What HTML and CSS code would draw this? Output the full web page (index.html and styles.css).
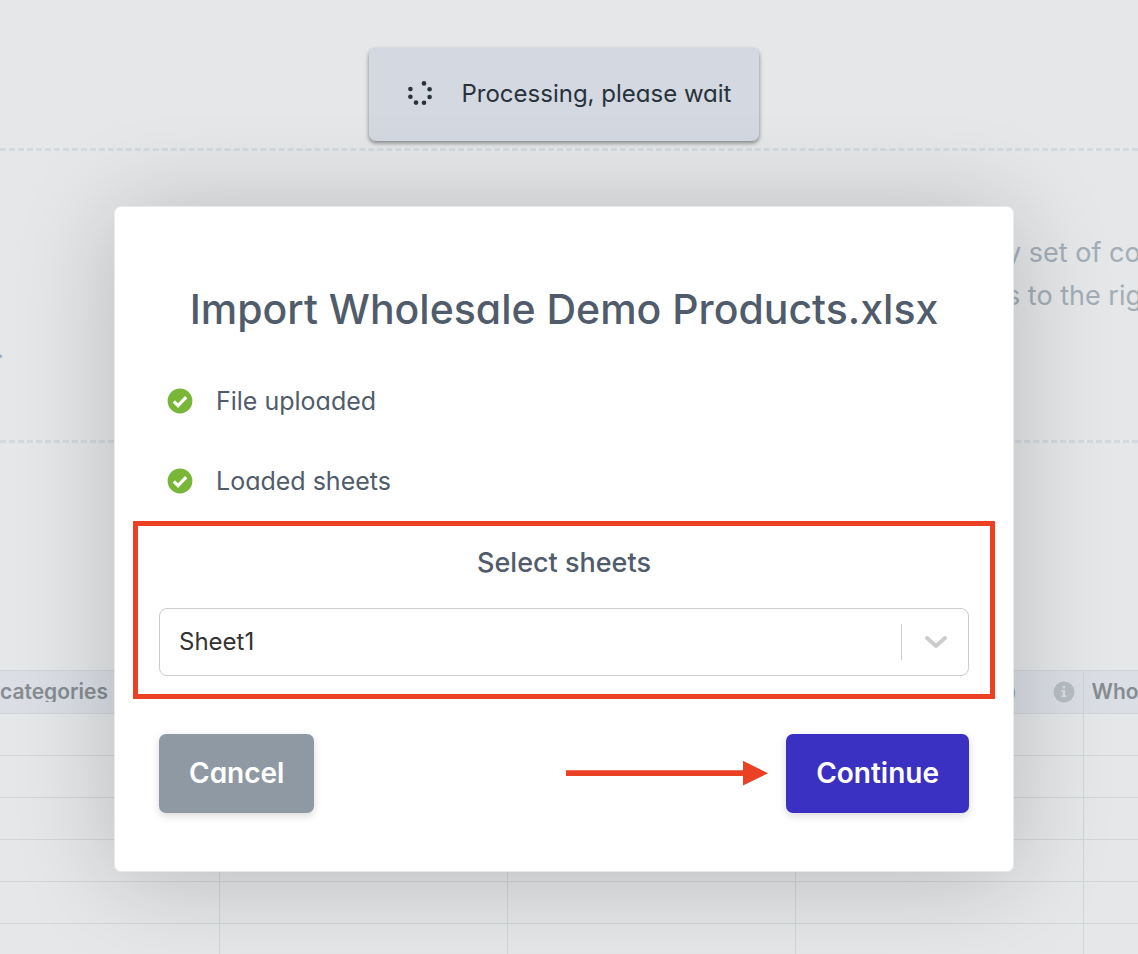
FILE: index.html
```
<!DOCTYPE html>
<html lang="en">
<head>
    <meta charset="UTF-8">
    <meta name="viewport" content="width=device-width, initial-scale=1.0">
    <title>Import products</title>
    <link rel="stylesheet" href="styles.css">
</head>
<body>

    <!-- page behind the dialog -->
    <main class="page">
        <section class="dropzone">
            <p class="dropzone-end">.</p>
            <p class="dropzone-hint">y set of co<br>s to the rig</p>
        </section>

        <table class="grid">
            <thead>
                <tr>
                    <th class="first"><span class="label">categories</span></th>
                    <th></th>
                    <th></th>
                    <th>
                        <div class="head-end">
                            <span class="label">)</span>
                            <svg class="info" viewBox="0 0 22 22" width="22" height="22">
                                <circle cx="11" cy="11" r="10.5" fill="#b6bdc4"/>
                                <path d="M9.6 5h2.6v2.4H9.6zM8.4 9h3.8v5.4h1.4v1.8H8.2v-1.8h1.4v-3.6H8.4z" fill="#d8dce2"/>
                            </svg>
                        </div>
                    </th>
                    <th class="last"><span class="label">Who</span></th>
                </tr>
            </thead>
            <tbody>
                <tr><td></td><td></td><td></td><td></td><td></td></tr>
                <tr><td></td><td></td><td></td><td></td><td></td></tr>
                <tr><td></td><td></td><td></td><td></td><td></td></tr>
                <tr><td></td><td></td><td></td><td></td><td></td></tr>
                <tr><td></td><td></td><td></td><td></td><td></td></tr>
                <tr><td></td><td></td><td></td><td></td><td></td></tr>
            </tbody>
        </table>
    </main>

    <div class="overlay">
        <div class="toast" role="status">
            <svg class="spinner" viewBox="0 0 26 26" width="26" height="26">
                <circle cx="17" cy="2.4" r="2.3"/>
                <circle cx="22.6" cy="8.2" r="2.3"/>
                <circle cx="22.6" cy="16" r="2.3"/>
                <circle cx="17" cy="21.8" r="2.3"/>
                <circle cx="9" cy="21.6" r="2.3"/>
                <circle cx="3.4" cy="15.8" r="2.3"/>
                <circle cx="3.4" cy="8" r="2.3"/>
            </svg>
            <span>Processing, please wait</span>
        </div>

        <form class="modal">
            <h1 class="title">Import Wholesale Demo Products.xlsx</h1>

            <ul class="steps">
                <li>
                    <svg viewBox="0 0 26 26" width="26" height="26">
                        <circle cx="13" cy="13" r="12.4" fill="#77b636"/>
                        <path d="M6.8 13.4l4.2 4.2 8.2-8.4" fill="none" stroke="#fff" stroke-width="3.2"/>
                    </svg>
                    File uploaded
                </li>
                <li>
                    <svg viewBox="0 0 26 26" width="26" height="26">
                        <circle cx="13" cy="13" r="12.4" fill="#77b636"/>
                        <path d="M6.8 13.4l4.2 4.2 8.2-8.4" fill="none" stroke="#fff" stroke-width="3.2"/>
                    </svg>
                    Loaded sheets
                </li>
            </ul>

            <div class="highlight">
                <label for="sheet">Select sheets</label>
                <div class="select">
                    <select id="sheet">
                        <option>Sheet1</option>
                    </select>
                    <span class="indicator">
                        <svg viewBox="0 0 24 16" width="24" height="16">
                            <path d="M3 4l9 8 9-8" fill="none" stroke="#ccc" stroke-width="4" stroke-linecap="round" stroke-linejoin="round"/>
                        </svg>
                    </span>
                </div>
            </div>

            <div class="actions">
                <button type="button" class="btn cancel">Cancel</button>
                <svg class="arrow" viewBox="0 0 202 26" width="202" height="26">
                    <path d="M0 9.2h177V-.2l25 12.4-25 12.4v-9.6H0z" fill="#ec4025"/>
                </svg>
                <button type="submit" class="btn continue">Continue</button>
            </div>
        </form>
    </div>

</body>
</html>
```
FILE: styles.css
```
:root {
    --page: #e5e7e9;
    --line: #d0d5d8;
    --dash: #d3d9e1;
    --text: #505c6b;
    --red: #ec4025;
    --font: Inter, "Noto Sans", sans-serif;
}

* {
    box-sizing: border-box;
}

body {
    margin: 0;
    min-height: 100vh;
    position: relative;
    overflow: hidden;
    background: var(--page);
    color: var(--text);
    font-family: var(--font);
    font-feature-settings: "cv11"; /* single-storey a */
}

/* --- page --- */
.page {
    height: 100vh;
    padding-top: 148px;
    overflow: hidden;
}

.dropzone {
    display: flex;
    justify-content: space-between;
    height: 295px;
    padding-top: 80px;
    border: dashed var(--dash);
    border-width: 3px 0;
    color: #a3adb6;
    font-size: 27px;
    line-height: 43px;
    white-space: nowrap;
}

.dropzone p {
    margin: 0;
}

.dropzone .dropzone-end {
    width: 4px;
    padding-top: 96px;
    direction: rtl;
}

.dropzone .dropzone-hint {
    width: 132px;
}

.grid {
    width: 100%;
    margin-top: 227px;
    border-collapse: collapse;
    table-layout: fixed;
}

.grid th,
.grid td {
    width: 288px;
    height: 42px;
    padding: 0 8px;
    border: 1px solid var(--line);
    border-left: 0;
}

.grid th {
    height: 43px;
    background: #dbdfe5;
    color: #868d92;
    font-size: 21px;
    font-weight: 600;
    text-align: left;
    font-feature-settings: normal;
}

.grid th.first {
    width: 219px;
    padding: 0;
}

.grid th.last {
    width: auto;
    padding-right: 0;
}

.grid th:last-child,
.grid td:last-child {
    border-right: 0;
}

.label {
    display: block;
    line-height: 20px;
    overflow: hidden;
}

.head-end {
    display: flex;
    align-items: center;
    justify-content: flex-end;
    gap: 36px;
}

/* --- overlay --- */
.overlay {
    position: absolute;
    inset: 0;
    display: flex;
    flex-direction: column;
    align-items: center;
    gap: 65px;
    padding: 48px 10px 0 0;
}

.toast {
    display: flex;
    align-items: center;
    gap: 29px;
    height: 93px;
    padding: 0 28px 2px 38px;
    border-radius: 7px;
    background: #d3d8e1;
    box-shadow: 0 2px 4px rgba(0, 0, 0, 0.45);
    color: #27323b;
    font-size: 24px;
}

.spinner {
    fill: #27323b;
}

.modal {
    width: 100%;
    max-width: 900px;
    padding: 72px 44px 58px;
    border: 1px solid #e9eaea;
    border-radius: 7px;
    background: #fff;
    box-shadow: 0 6px 100px rgba(0, 0, 0, 0.2);
}

.title {
    margin: 0 0 22px;
    font-size: 41px;
    font-weight: 500;
    line-height: 60px;
    text-align: center;
    white-space: nowrap;
}

.steps {
    margin: 0;
    padding: 0 0 0 8px;
    list-style: none;
    font-size: 25px;
}

.steps li {
    display: flex;
    align-items: center;
    gap: 23px;
    height: 80px;
}

.highlight {
    margin: 0 -26px 35px;
    padding: 18px 21px;
    border: 5px solid var(--red);
}

.highlight label {
    display: block;
    margin-bottom: 26px;
    font-size: 27px;
    font-weight: 500;
    line-height: 38px;
    text-align: center;
}

.select {
    position: relative;
}

.select select {
    display: block;
    width: 100%;
    height: 68px;
    padding: 0 19px 2px;
    border: 1px solid #ccc;
    border-radius: 8px;
    background: #fff;
    color: #333;
    font: inherit;
    font-size: 24px;
    appearance: none;
}

/* separator and chevron over the select */
.indicator {
    position: absolute;
    top: 16px;
    right: 0;
    bottom: 16px;
    display: flex;
    align-items: center;
    justify-content: center;
    width: 68px;
    border-left: 1px solid #ccc;
    pointer-events: none;
}

.actions {
    display: flex;
    align-items: center;
    gap: 18px;
}

.btn {
    height: 79px;
    padding: 0 30px 2px;
    border: 0;
    border-radius: 7px;
    box-shadow: 0 3px 8px rgba(0, 0, 0, 0.15);
    color: #fff;
    font: inherit;
    font-size: 28px;
    font-weight: 600;
}

.cancel {
    background: #8f99a3;
}

.continue {
    background: #3a30c1;
}

.arrow {
    margin-left: auto;
}
```
